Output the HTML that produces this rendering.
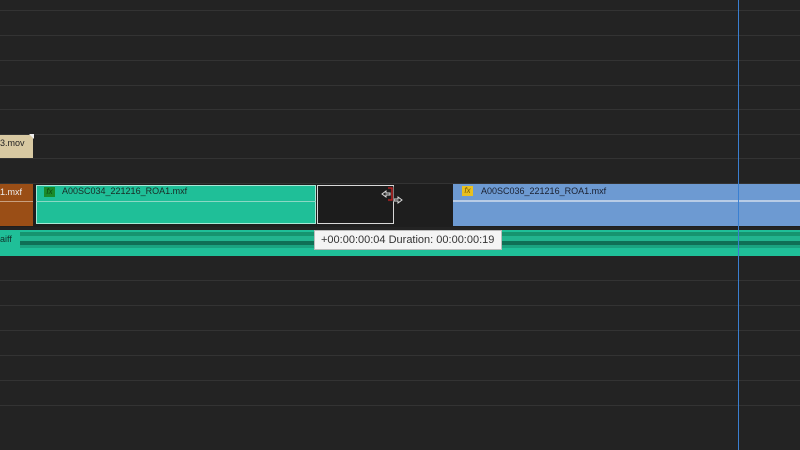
<!DOCTYPE html>
<html><head><style>
body{margin:0;width:800px;height:450px;overflow:hidden;background:#232323;position:relative;font-family:"Liberation Sans",sans-serif}
.l{position:absolute;left:0;width:800px;height:1px;background:#333}
.a{position:absolute}
</style></head><body>
<div class="l" style="top:10px"></div><div class="l" style="top:35px"></div><div class="l" style="top:60px"></div><div class="l" style="top:85px"></div><div class="l" style="top:109px"></div><div class="l" style="top:134px"></div><div class="l" style="top:158px"></div><div class="l" style="top:183px"></div><div class="l" style="top:280px"></div><div class="l" style="top:305px"></div><div class="l" style="top:330px"></div><div class="l" style="top:355px"></div><div class="l" style="top:380px"></div><div class="l" style="top:405px"></div>
<div class="a" style="left:0;top:184px;width:800px;height:43px;background:#1e1e1e"></div>
<div class="a" style="left:0;top:135px;width:33px;height:23px;background:#d8c9a2;font-size:9px;color:#222;line-height:16px">3.mov</div>
<div class="a" style="left:29px;top:134px;width:0;height:0;border-top:5px solid #eee;border-left:5px solid transparent"></div>
<div class="a" style="left:0;top:184px;width:33px;height:42px;background:#9a4e16;font-size:9px;color:#eee;line-height:16px">1.mxf</div>
<div class="a" style="left:0;top:201px;width:33px;height:1px;background:#c9a080"></div>
<div class="a" style="left:36px;top:185px;width:278px;height:37px;background:#1fbf98;border:1px solid #a8e8d6"></div>
<div class="a" style="left:36px;top:201px;width:280px;height:1px;background:#8ad8c4"></div>
<div class="a" style="left:44px;top:187px;width:11px;height:10px;background:#1a8a2a;color:#0a4a10;font-size:8px;font-style:italic;text-align:center;line-height:10px">fx</div>
<div class="a" style="left:62px;top:186px;font-size:9px;color:#1a2a25">A00SC034_221216_ROA1.mxf</div>
<div class="a" style="left:317px;top:185px;width:75px;height:37px;border:1.5px solid #d8d8d8;background:#1c1c1c"></div>
<svg class="a" style="left:380px;top:184px" width="26" height="24" viewBox="0 0 26 24">
<path d="M8 4h4v12h-4" fill="none" stroke="#222" stroke-width="3"/>
<path d="M8 4h4v12h-4" fill="none" stroke="#d02020" stroke-width="1.3"/>
<path d="M2 10l4-3v2h4v2h-4v2z" fill="#222" stroke="#ddd" stroke-width="1"/>
<path d="M22 16l-4-3v2h-4v2h4v2z" fill="#222" stroke="#ddd" stroke-width="1"/>
</svg>
<div class="a" style="left:453px;top:184px;width:347px;height:42px;background:#6d9ad2"></div>
<div class="a" style="left:453px;top:200px;width:347px;height:2px;background:#b8cce6"></div>
<div class="a" style="left:462px;top:186px;width:11px;height:10px;background:#e8c020;color:#7a5a00;font-size:8px;font-style:italic;text-align:center;line-height:10px">fx</div>
<div class="a" style="left:481px;top:186px;font-size:9px;color:#1a2030">A00SC036_221216_ROA1.mxf</div>
<div class="a" style="left:0;top:230px;width:800px;height:26px;background:#1fbf98"></div>
<div class="a" style="left:20px;top:232px;width:780px;height:4px;background:#16946f"></div>
<div class="a" style="left:20px;top:236px;width:780px;height:5px;background:#22b48e"></div>
<div class="a" style="left:20px;top:241px;width:780px;height:4px;background:#0f6f55"></div>
<div class="a" style="left:20px;top:245px;width:780px;height:3px;background:#1aa27f"></div>
<div class="a" style="left:0;top:234px;font-size:9px;color:#10332a">aiff</div>
<div class="a" style="left:738px;top:0;width:1px;height:450px;background:#3a7fd0"></div>
<div class="a" style="left:314px;top:230px;width:188px;height:20px;background:#f4f4f4;border:1px solid #bbb;box-sizing:border-box;font-size:11px;color:#333;line-height:18px;padding-left:6px">+00:00:00:04 Duration: 00:00:00:19</div>
</body></html>
